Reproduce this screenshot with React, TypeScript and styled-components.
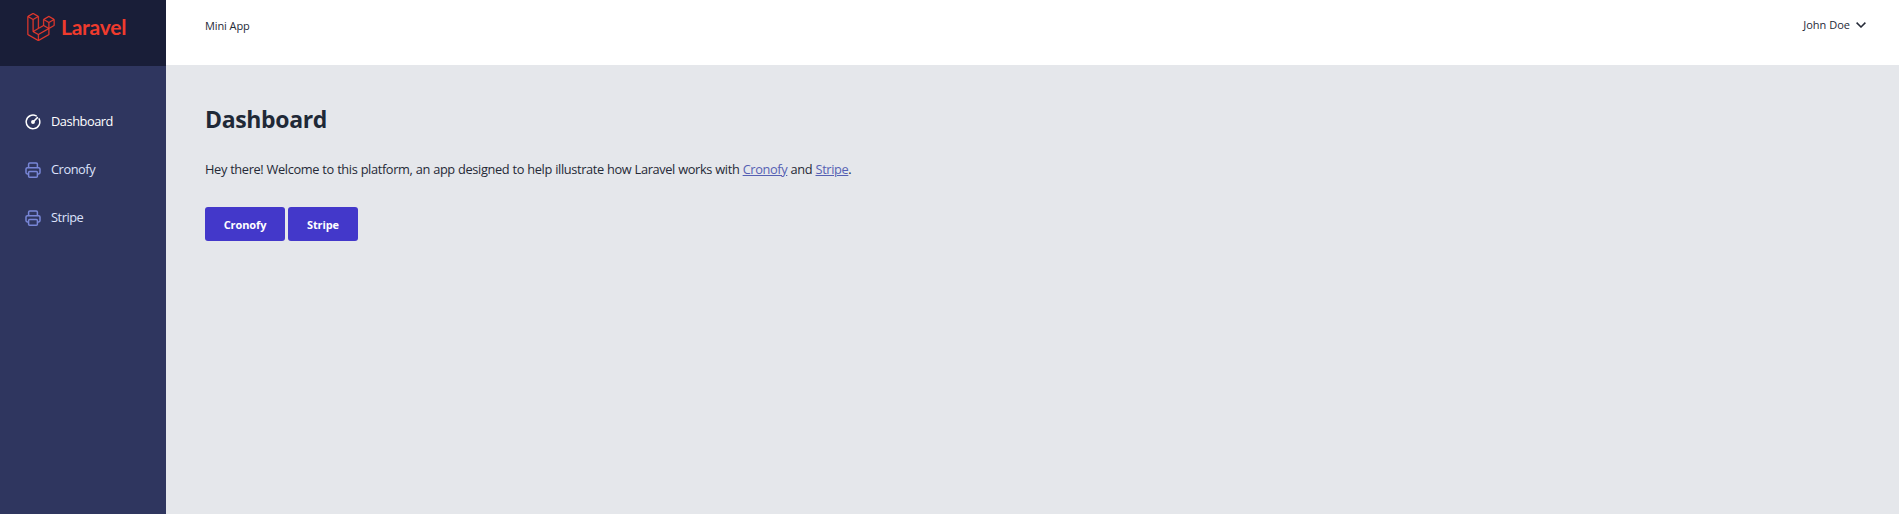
import React from "react";
import styled, { createGlobalStyle } from "styled-components";
import { SiLaravel } from "react-icons/si";

const GlobalStyle = createGlobalStyle`
  * { box-sizing: border-box; }
  body { margin: 0; background: #e5e7eb; font-family: "Open Sans", "Noto Sans", sans-serif; }
`;
const Shell = styled.div`display: flex; height: 514px; overflow: hidden;`;
const Sidebar = styled.aside`width: 166px; flex: none; background: #2f365f;`;
const Brand = styled.div`
  height: 66px; padding: 13px 0 0 27px; display: flex; align-items: flex-start;
  background: #191e38; color: #ef3b2d;
  svg { stroke-width: 0.25px; }
`;
const BrandName = styled.span`
  margin-left: 6px; font: 700 21px/28px Lato, sans-serif; letter-spacing: -0.25px;
  white-space: nowrap;
`;
const Nav = styled.nav`padding: 41px 0 0 25px;`;
const NavItem = styled.a<{ $active?: boolean }>`
  display: flex; align-items: center; height: 28px; margin-bottom: 20px;
  font-size: 12.8px; letter-spacing: -0.45px;
  color: ${(p) => (p.$active ? "#fff" : "#dde2fb")};
  svg { width: 16px; height: 16px; margin: 1px 10px 0 0; flex: none; color: ${(p) => (p.$active ? "#fff" : "#7886d7")}; }
`;
const Main = styled.div`flex: 1; min-width: 0;`;
const Header = styled.header`
  height: 65px; padding: 16px 33px 0 39px; display: flex;
  justify-content: space-between; background: #fff; color: #252a37;
  font-size: 11px; line-height: 20px;
`;
const AppName = styled.span`letter-spacing: -0.1px;`;
const User = styled.div`
  display: flex; align-items: center; height: 18px; letter-spacing: 0;
  svg { margin-left: 6px; }
`;
const Content = styled.main`padding: 38px 39px;`;
const Title = styled.h1`
  margin: 0; font-size: 23px; line-height: 32px; font-weight: 700; letter-spacing: -0.35px; color: #1f2937;
`;
const Intro = styled.p`
  margin: 24px 0 28px; font-size: 12.8px; line-height: 20px; letter-spacing: -0.37px; word-spacing: 0.3px;
  color: #252a37; white-space: nowrap;
`;
const TextLink = styled.a`color: #5661b3; text-decoration: underline;`;
const Actions = styled.div`display: flex; gap: 3px;`;
const Button = styled.button<{ $width: number }>`
  width: ${(p) => p.$width}px; height: 34px; padding: 2px 0 0; border: 0; border-radius: 3px;
  background: #4338ca; color: #fff; font: 700 11px/16px "Open Sans", sans-serif; letter-spacing: -0.1px;
`;

const GaugeIcon = () => (
  <svg viewBox="0 0 16 16" fill="none" stroke="currentColor" strokeWidth="1.5" strokeLinecap="round">
    <path d="M11.2 1.9A6.8 6.8 0 1 0 14.1 4.9" />
    <path d="M8 8l4.4-4.4" />
    <circle cx="8" cy="8" r="1.2" fill="currentColor" />
  </svg>
);
const PrinterIcon = () => (
  <svg viewBox="0 0 16 16" fill="none" stroke="currentColor" strokeWidth="1.5" strokeLinejoin="round">
    <path d="M3.6 5.6V2.2Q3.6 1 4.8 1h6.4q1.2 0 1.2 1.2v3.4" />
    <path d="M3.6 11.9H2.3Q1 11.9 1 10.6V7.1Q1 5.7 2.4 5.7h11.2Q15 5.7 15 7.1v3.5q0 1.3-1.3 1.3h-1.3" />
    <rect x="3.6" y="9.4" width="8.8" height="5.8" rx="1" />
  </svg>
);
const ChevronIcon = () => (
  <svg width="10" height="6" viewBox="0 0 10 6" fill="none" stroke="currentColor" strokeWidth="1.5">
    <path d="M.6 .6L5 5L9.4 .6" />
  </svg>
);

export default function App() {
  return (
    <Shell>
      <GlobalStyle />
      <Sidebar>
        <Brand>
          <SiLaravel size={28} />
          <BrandName>Laravel</BrandName>
        </Brand>
        <Nav>
          <NavItem $active><GaugeIcon />Dashboard</NavItem>
          <NavItem><PrinterIcon />Cronofy</NavItem>
          <NavItem><PrinterIcon />Stripe</NavItem>
        </Nav>
      </Sidebar>
      <Main>
        <Header>
          <AppName>Mini App</AppName>
          <User>John Doe<ChevronIcon /></User>
        </Header>
        <Content>
          <Title>Dashboard</Title>
          <Intro>
            Hey there! Welcome to this platform, an app designed to help illustrate how Laravel works with{" "}
            <TextLink>Cronofy</TextLink> and <TextLink>Stripe</TextLink>.
          </Intro>
          <Actions>
            <Button $width={80}>Cronofy</Button>
            <Button $width={70}>Stripe</Button>
          </Actions>
        </Content>
      </Main>
    </Shell>
  );
}
